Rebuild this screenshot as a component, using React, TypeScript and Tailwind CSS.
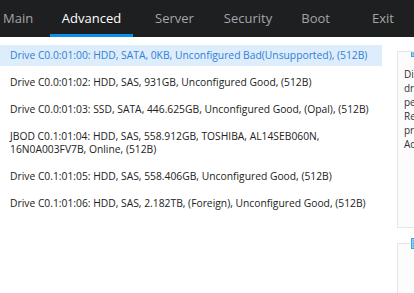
import React from "react";

const tabs = ["Main", "Advanced", "Server", "Security", "Boot", "Exit"];

const rows: string[][] = [
  ["Drive C0.0:01:00: HDD, SATA, 0KB, Unconfigured Bad(Unsupported), (512B)"],
  ["Drive C0.0:01:02: HDD, SAS, 931GB, Unconfigured Good, (512B)"],
  ["Drive C0.0:01:03: SSD, SATA, 446.625GB, Unconfigured Good, (Opal), (512B)"],
  ["JBOD C0.1:01:04: HDD, SAS, 558.912GB, TOSHIBA, AL14SEB060N,", "16N0A003FV7B, Online, (512B)"],
  ["Drive C0.1:01:05: HDD, SAS, 558.406GB, Unconfigured Good, (512B)"],
  ["Drive C0.1:01:06: HDD, SAS, 2.182TB, (Foreign), Unconfigured Good, (512B)"],
];

function LegendIcon() {
  return (
    <svg width="9" height="11" viewBox="0 0 9 11">
      <rect x="0.5" y="0.5" width="8" height="10" fill="#8fd0f5" stroke="#3aa3e3" />
      <rect x="2" y="2.5" width="5" height="1" fill="#3aa3e3" />
      <rect x="2" y="5" width="5" height="1" fill="#3aa3e3" />
      <rect x="2" y="7.5" width="5" height="1" fill="#3aa3e3" />
    </svg>
  );
}

export default function App() {
  return (
    <div className="w-[414px] h-[293px] overflow-hidden bg-white" style={{ fontFamily: "'Open Sans', 'Noto Sans', sans-serif" }}>
      <div className="h-[37px] bg-[#1e1f21] flex items-stretch">
        {tabs.map((t) => {
          const active = t === "Advanced";
          return (
            <div
              key={t}
              className={
                "relative flex items-center text-[13px] " +
                (active ? "text-white" : "text-[#a3a5a8]")
              }
              style={{
                paddingLeft: t === "Main" ? 3 : 0,
                width: t === "Main" ? 50 : t === "Advanced" ? 83 : undefined,
                justifyContent: t === "Main" ? "flex-start" : "center",
                marginLeft: t === "Server" ? 22 : t === "Security" ? 30 : t === "Boot" ? 29 : t === "Exit" ? 42 : 0,
              }}
            >
              {t}
              {active && <div className="absolute left-0 right-0 bottom-0 h-[3px] bg-[#0a90e8]" />}
            </div>
          );
        })}
      </div>
      <div className="flex pt-[8px]">
        <div className="w-[382px] shrink-0 flex flex-col gap-[6px]">
          {rows.map((r, i) => (
            <div
              key={i}
              className={
                "pl-[10px] py-[4px] text-[10.3px] leading-[13px] " +
                (i === 0 ? "bg-[#deedfb] text-[#2f7fd9]" : "text-[#222]")
              }
            >
              {r.map((l, j) => (
                <div key={j} className="whitespace-nowrap">{l}</div>
              ))}
            </div>
          ))}
        </div>
        <div className="ml-[15px] flex-1 flex flex-col">
          <div className="relative mt-[6px] border border-[#e6e6e6] border-r-0 bg-[#fcfcfc] h-[177px] pl-[6px] pt-[15px] text-[10px] leading-[14px] text-[#333] overflow-hidden">
            <div className="absolute left-[12px] top-[-6px] bg-white px-[1px]"><LegendIcon /></div>
            <div>Dis</div>
            <div>dri</div>
            <div>pe</div>
            <div>Re</div>
            <div>pro</div>
            <div>Ad</div>
          </div>
          <div className="relative mt-[15px] border border-[#e6e6e6] border-r-0 bg-[#fcfcfc] h-[60px]">
            <div className="absolute left-[12px] top-[-6px] bg-white px-[1px]"><LegendIcon /></div>
          </div>
        </div>
      </div>
    </div>
  );
}
